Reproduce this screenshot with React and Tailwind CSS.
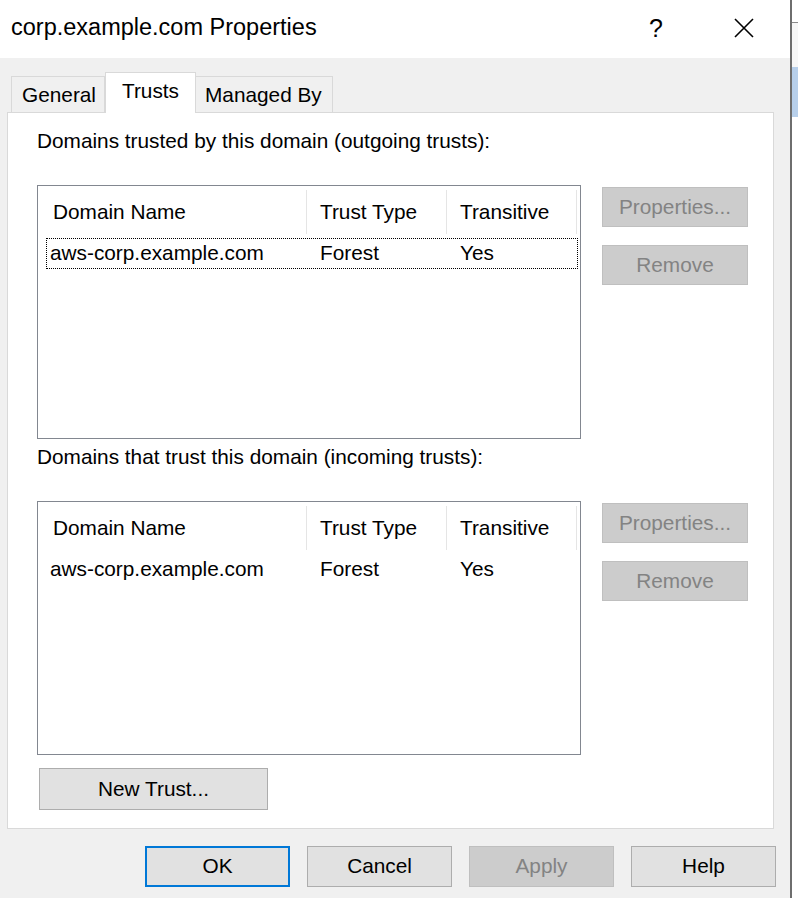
import React from "react";

function ListBox({ focused }) {
  return (
    <div className="w-[544px] h-[254px] border border-[#828790] bg-white flex flex-col">
      <div className="h-[52px] flex items-stretch">
        <div className="w-[269px] flex items-center pl-[15px] border-r border-[#e5e5e5] my-[4px]">Domain Name</div>
        <div className="w-[140px] flex items-center pl-[13px] border-r border-[#e5e5e5] my-[4px]">Trust Type</div>
        <div className="w-[130px] flex items-center pl-[13px] border-r border-[#e5e5e5] my-[4px]">Transitive</div>
      </div>
      <div
        className={
          focused
            ? "ml-[8px] w-[532px] h-[31px] border border-dotted border-black flex items-center"
            : "ml-[8px] w-[532px] h-[31px] border border-transparent flex items-center"
        }
      >
        <div className="w-[260px] pl-[3px]">aws-corp.example.com</div>
        <div className="w-[140px] pl-[13px]">Forest</div>
        <div className="pl-[13px]">Yes</div>
      </div>
    </div>
  );
}

function SideButtons() {
  return (
    <div className="flex flex-col gap-[18px] pt-[2px]">
      <div className="w-[146px] h-[40px] bg-[#cccccc] border border-[#bfbfbf] text-[#838383] flex items-center justify-center">
        Properties...
      </div>
      <div className="w-[146px] h-[40px] bg-[#cccccc] border border-[#bfbfbf] text-[#838383] flex items-center justify-center">
        Remove
      </div>
    </div>
  );
}

function Btn({ children, variant }) {
  const cls =
    variant === "default"
      ? "w-[145px] h-[41px] bg-[#e1e1e1] border-2 border-[#0078d7] flex items-center justify-center text-black"
      : variant === "disabled"
      ? "w-[145px] h-[41px] bg-[#cccccc] border border-[#bfbfbf] flex items-center justify-center text-[#838383]"
      : "w-[145px] h-[41px] bg-[#e1e1e1] border border-[#adadad] flex items-center justify-center text-black";
  return <div className={cls}>{children}</div>;
}

export default function App() {
  return (
    <div className="w-[798px] h-[898px] flex bg-white overflow-hidden font-['Liberation_Sans',Arial,sans-serif] text-[20.8px] text-black leading-none">
      <div className="w-[790px] flex flex-col">
        {/* Title bar */}
        <div className="h-[58px] bg-white flex items-center pl-[11px]">
          <div className="text-[23.5px] pb-[2px]">corp.example.com Properties</div>
          <div className="ml-auto w-[40px] text-[25px] pb-[2px] mr-[44px]">?</div>
          <svg width="22" height="22" viewBox="0 0 22 22" className="mr-[35px] mb-[2px]">
            <path d="M2 2 L20 20 M20 2 L2 20" stroke="#000" strokeWidth="1.6" fill="none" />
          </svg>
        </div>
        {/* Body */}
        <div className="flex-1 bg-[#f0f0f0] flex flex-col pl-[7px]">
          {/* Tabs */}
          <div className="h-[54px] flex items-end pl-[4px] relative z-10">
            <div className="w-[94px] h-[36px] border border-b-0 border-[#d9d9d9] bg-[#f0f0f0] flex items-center pl-[10px] pt-[2px]">
              General
            </div>
            <div className="w-[91px] h-[41px] -mb-px border border-b-0 border-[#d9d9d9] bg-white flex items-start pl-[16px] pt-[8px]">
              Trusts
            </div>
            <div className="w-[137px] h-[36px] border border-b-0 border-l-0 border-[#d9d9d9] bg-[#f0f0f0] flex items-center pl-[9px] pt-[2px]">
              Managed By
            </div>
          </div>
          {/* Panel */}
          <div className="w-[767px] h-[717px] border border-[#d9d9d9] bg-white flex flex-col pl-[29px]">
            <div className="mt-[16px] h-[24px] flex items-center">Domains trusted by this domain (outgoing trusts):</div>
            <div className="mt-[32px] flex gap-[21px]">
              <ListBox focused />
              <SideButtons />
            </div>
            <div className="mt-[6px] h-[24px] flex items-center">Domains that trust this domain (incoming trusts):</div>
            <div className="mt-[32px] flex gap-[21px]">
              <ListBox />
              <SideButtons />
            </div>
            <div className="mt-[13px] ml-[2px]">
              <div className="w-[229px] h-[42px] bg-[#e1e1e1] border border-[#adadad] flex items-center justify-center">
                New Trust...
              </div>
            </div>
          </div>
          {/* Bottom buttons */}
          <div className="mt-[17px] flex gap-[17px] pl-[138px]">
            <Btn variant="default">OK</Btn>
            <Btn>Cancel</Btn>
            <Btn variant="disabled">Apply</Btn>
            <Btn>Help</Btn>
          </div>
        </div>
      </div>
      <div className="w-[2px] bg-[#6e6e6e]" />
      <div className="flex-1 flex flex-col bg-white">
        <div className="h-[22px] bg-white" />
        <div className="h-px bg-[#8a8a8a]" />
        <div className="h-[44px] bg-[#f7f7f7]" />
        <div className="h-[50px] bg-[#b7cfea]" />
        <div className="flex-1 bg-white" />
      </div>
    </div>
  );
}
